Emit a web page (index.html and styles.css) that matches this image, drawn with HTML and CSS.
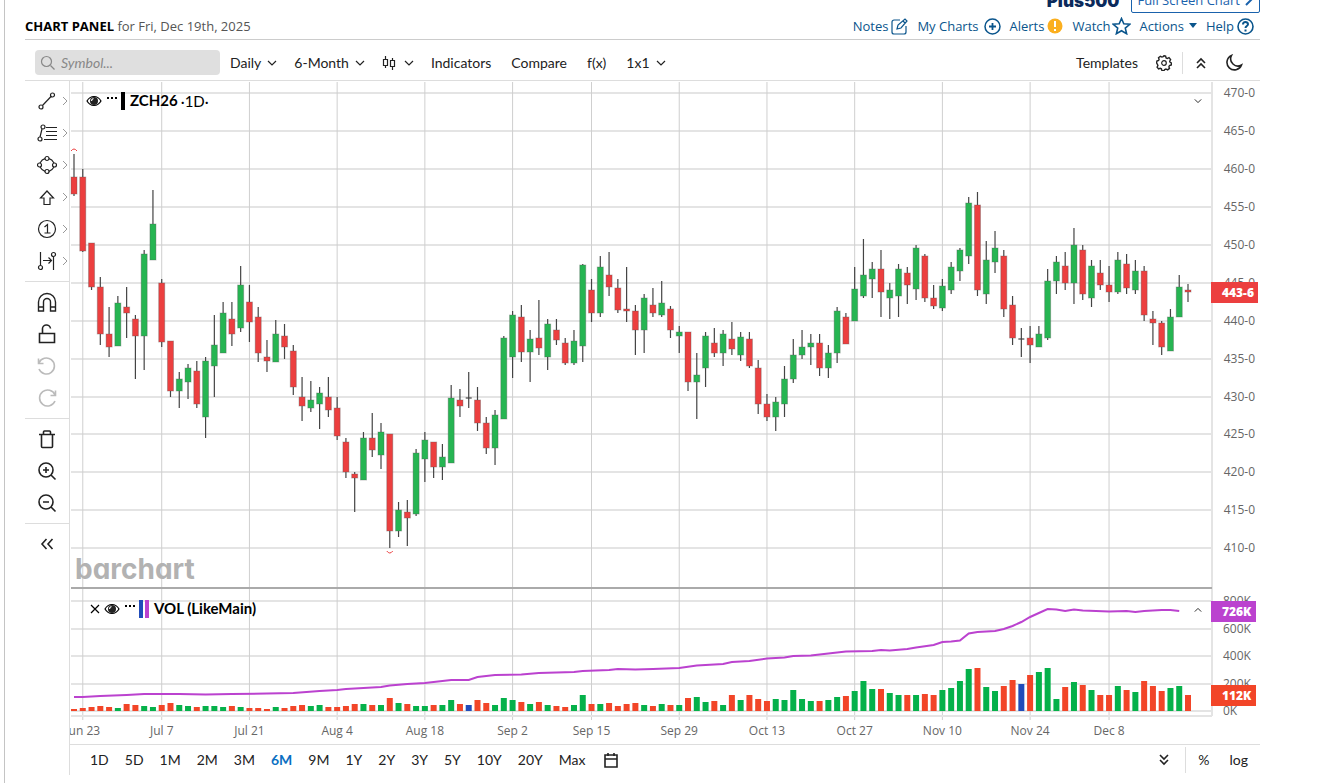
FILE: index.html
```html
<!DOCTYPE html>
<html lang="en">

<head>
    <meta charset="UTF-8">
    <meta name="viewport" content="width=device-width, initial-scale=1.0">
    <title>ZCH26 Interactive Chart</title>
    <link rel="stylesheet" href="styles.css">
</head>

<body>
    <!-- Shared shapes -->
    <svg class="sprite" aria-hidden="true">
        <symbol id="chevron" viewBox="0 0 10 10"><path d="M1 3l4 4 4-4" /></symbol>
        <symbol id="arrow-right" viewBox="0 0 6 10"><path d="M1 1l4 4-4 4" /></symbol>
        <symbol id="double" viewBox="0 0 12 14"><path d="M2 7l4-4 4 4M2 12l4-4 4 4" /></symbol>
        <symbol id="eye" viewBox="0 0 16 12">
            <path d="M1 6c3.500-6 10.500-6 14 0-3.500 6-10.500 6-14 0z" />
            <circle cx="8" cy="6" r="4" fill="#222" stroke="none" />
            <path d="M5.500 6a2.500 2.500 0 0 1 2-2.500" stroke="#fff" />
        </symbol>
        <symbol id="dots" viewBox="0 0 12 4">
            <path d="M1 2h2M5 2h2M9 2h2" stroke-width="2" />
        </symbol>
    </svg>

    <div class="page">
        <div class="promo">
            <span class="promo-logo">Plus500</span>
            <a class="full-screen" href="#full">Full Screen Chart
                <svg class="icon" width="8" height="12" viewBox="0 0 8 12"><path d="M1 1l5 5-5 5" stroke-width="2" /></svg>
            </a>
        </div>

        <header class="panel-header">
            <h1>CHART PANEL <span>for Fri, Dec 19th, 2025</span></h1>
            <nav class="panel-links">
                <a href="#notes">Notes
                    <svg class="icon" width="17" height="17" viewBox="0 0 17 17"><path d="M9 2H3a2 2 0 0 0-2 2v10a2 2 0 0 0 2 2h10a2 2 0 0 0 2-2V8M6 11l1-4 7-6 2 2-6 7zM12 3l2 2" /></svg>
                </a>
                <a href="#charts" class="wide">My Charts
                    <svg class="icon" width="17" height="17" viewBox="0 0 17 17"><circle cx="8.500" cy="8.500" r="7.500" stroke-width="1.500" /><path d="M8.500 5v7M5 8.500h7" stroke-width="1.800" /></svg>
                </a>
                <a href="#alerts">Alerts
                    <svg class="icon" width="16" height="16" viewBox="0 0 16 16"><circle cx="8" cy="8" r="7.500" fill="#fbaf1f" stroke="none" /><path d="M8 3v6M8 11v2" stroke="#fff" stroke-width="2" /></svg>
                </a>
                <a href="#watch" class="tight">Watch
                    <svg class="icon" width="19" height="18" viewBox="0 0 19 18"><path d="M9.500 1.500l2.300 5.300 6 .5-4.500 3.800 1.300 5.600-5.100-3-5.100 3 1.300-5.600L1.200 7.300l6-.5z" stroke-width="1.600" /></svg>
                </a>
                <a href="#actions" class="wide">Actions
                    <svg width="8" height="9" viewBox="0 0 8 9"><path d="M0 1h8L4 6z" fill="#0a558c" /></svg>
                </a>
                <a href="#help">Help
                    <svg class="icon" width="17" height="17" viewBox="0 0 17 17"><circle cx="8.500" cy="8.500" r="7.500" stroke-width="1.600" /><path d="M6 6.500c0-3.300 5-3.200 5-.2 0 1.700-2.500 1.700-2.500 3.700M8.500 11.500v2" stroke-width="2" /></svg>
                </a>
            </nav>
        </header>

        <div class="toolbar">
            <label class="search">
                <svg class="icon" width="16" height="16" viewBox="0 0 16 16"><circle cx="6.500" cy="6.500" r="5" /><path d="M10.500 10.500l4 4" /></svg>
                <input type="text" placeholder="Symbol..." aria-label="Symbol">
            </label>
            <button class="menu">Daily <svg class="icon" width="10" height="10"><use href="#chevron" /></svg></button>
            <button class="menu">6-Month <svg class="icon" width="10" height="10"><use href="#chevron" /></svg></button>
            <button class="menu" aria-label="Bar type">
                <svg class="icon" width="16" height="16" viewBox="0 0 16 16"><path d="M1.500 4.500h4v6h-4zM3.500 1v3M3.500 11v2M8.500 5.500h4v6h-4zM10.500 3v2M10.500 12v3" /></svg>
                <svg class="icon" width="10" height="10"><use href="#chevron" /></svg>
            </button>
            <button>Indicators</button>
            <button>Compare</button>
            <button>f(x)</button>
            <button class="menu">1x1 <svg class="icon" width="10" height="10"><use href="#chevron" /></svg></button>
            <div class="toolbar-right">
                <button>Templates</button>
                <button aria-label="Settings">
                    <svg class="icon" width="16" height="16" viewBox="0 0 16 16"><path d="M8 .8l1.600.3.500 1.800 1.200.6 1.700-.9 1.600 1.900-.9 1.700.4 1.100 1.300.7-.1 2-1.800.5-.6 1.200.6 1.700-1.900 1.500-1.700-.9-1.200.5-.8 1.200-2-.2-.5-1.700-1.200-.5-1.600.6-1.500-1.800.8-1.600-.5-1.200L.6 8l.3-2 1.700-.5.5-1-.6-1.700 1.900-1.500 1.500.8 1.300-.5z" stroke-width="1.400" /><circle cx="8" cy="8" r="2.300" /></svg>
                </button>
                <span class="divider"></span>
                <button aria-label="Collapse"><svg class="icon bold" width="12" height="14"><use href="#double" /></svg></button>
                <button aria-label="Dark mode">
                    <svg class="icon bold" width="18" height="18" viewBox="0 0 18 18"><path d="M6.500 1.500A7.500 7.500 0 1 0 16.500 11 7.200 7.200 0 0 1 6.500 1.500z" /></svg>
                </button>
            </div>
        </div>

        <div class="workspace">
            <div class="tools">
                <div class="tool-group">
                    <button aria-label="Line"><svg class="icon" width="20" height="20" viewBox="0 0 20 20"><circle cx="4" cy="16" r="2" /><circle cx="15.500" cy="4" r="2" /><path d="M5.500 14.500l8.500-9" /></svg><svg class="arrow" width="6" height="10"><use href="#arrow-right" /></svg></button>
                    <button aria-label="Fibonacci"><svg class="icon" width="20" height="20" viewBox="0 0 20 20"><circle cx="3" cy="16" r="2" /><circle cx="6" cy="4" r="2" /><path d="M3 14l1-4 1-4M9 4.500h11M9 8.500h11M9 12.500h11M7 16.500h13" /></svg><svg class="arrow" width="6" height="10"><use href="#arrow-right" /></svg></button>
                    <button aria-label="Shape"><svg class="icon" width="20" height="20" viewBox="0 0 20 20"><circle cx="10" cy="3.500" r="2" /><circle cx="10" cy="16.500" r="2" /><circle cx="2.500" cy="10" r="2" /><circle cx="17.500" cy="10" r="2" /><path d="M3 8Q5 4.500 8 3.700M12 3.700Q15 4.500 17 8M3 12Q5 15.500 8 16.300M12 16.300Q15 15.500 17 12" /></svg><svg class="arrow" width="6" height="10"><use href="#arrow-right" /></svg></button>
                    <button aria-label="Arrow"><svg class="icon" width="20" height="20" viewBox="0 0 20 20"><path d="M10 4l6.500 7H13v6.500H7V11H3.500z" /></svg><svg class="arrow" width="6" height="10"><use href="#arrow-right" /></svg></button>
                    <button aria-label="Count"><svg class="icon" width="20" height="20" viewBox="0 0 20 20"><circle cx="10" cy="10" r="8.500" /><path d="M7.500 8L10.500 5.500V14M7.500 14h6" /></svg><svg class="arrow" width="6" height="10"><use href="#arrow-right" /></svg></button>
                    <button aria-label="Measure"><svg class="icon" width="20" height="20" viewBox="0 0 20 20"><circle cx="3.500" cy="16.500" r="2" /><circle cx="16.500" cy="3.500" r="2" /><path d="M3.500 1v13M16.500 6v13M6 9.500h8M11.500 6.500l3 3-3 3" /></svg><svg class="arrow" width="6" height="10"><use href="#arrow-right" /></svg></button>
                </div>
                <div class="tool-group">
                    <button aria-label="Magnet"><svg class="icon" width="20" height="20" viewBox="0 0 20 20"><path d="M1.500 19v-9a8.500 8.500 0 0 1 17 0v9h-5v-9a3.500 3.500 0 0 0-7 0v9zM1.500 15h5M13.500 15h5" stroke-width="1.400" /></svg></button>
                    <button aria-label="Lock"><svg class="icon bold" width="20" height="20" viewBox="0 0 20 20"><path d="M2.500 9.500h15v9h-15zM5.500 9V5.500a4 4 0 0 1 8-1" /></svg></button>
                    <button aria-label="Undo" disabled><svg class="icon bold" width="20" height="20" viewBox="0 0 20 20"><path d="M1.500 2.500v5h5M2 7a8 8 0 1 1 0 6" /></svg></button>
                    <button aria-label="Redo" disabled><svg class="icon bold" width="20" height="20" viewBox="0 0 20 20"><path d="M18.500 2.500v5h-5M18 7a8 8 0 1 0 0 6" /></svg></button>
                </div>
                <div class="tool-group">
                    <button aria-label="Delete"><svg class="icon bold" width="20" height="20" viewBox="0 0 20 20"><path d="M2 5.500h16M4.500 6v11.500a1 1 0 0 0 1 1h9a1 1 0 0 0 1-1V6M6.500 5V3a1 1 0 0 1 1-1h5a1 1 0 0 1 1 1v2" /></svg></button>
                    <button aria-label="Zoom in"><svg class="icon bold" width="20" height="20" viewBox="0 0 20 20"><circle cx="9" cy="9" r="7" /><path d="M14 14l4.500 4.500M6 9h6M9 6v6" /></svg></button>
                    <button aria-label="Zoom out"><svg class="icon bold" width="20" height="20" viewBox="0 0 20 20"><circle cx="9" cy="9" r="7" /><path d="M14 14l4.500 4.500M6 9h6" /></svg></button>
                </div>
                <div class="tool-group">
                    <button aria-label="Hide tools"><svg class="icon bold" width="20" height="20" viewBox="0 0 20 20"><path d="M9.500 5L5 10l4.500 5M15.500 5L11 10l4.500 5" /></svg></button>
                </div>
            </div>

            <div class="chart-area">
                <div class="chart-box">
                    <svg id="chart" role="img" aria-label="ZCH26 daily price and volume"></svg>
                    <div class="watermark">barchart</div>
                    <div class="legend legend-price">
                        <button aria-label="Hide series"><svg class="icon" width="16" height="12"><use href="#eye" /></svg></button>
                        <button aria-label="Series options" class="more"><svg class="icon" width="12" height="4"><use href="#dots" /></svg></button>
                        <span class="swatch black"></span>
                        <b>ZCH26</b><span>·1D·</span>
                    </div>
                    <button class="pane-toggle toggle-price" aria-label="Collapse pane"><svg class="icon" width="8" height="8"><use href="#chevron" /></svg></button>
                    <div class="legend legend-volume">
                        <button aria-label="Remove"><svg class="icon" width="10" height="10" viewBox="0 0 10 10"><path d="M1 1l8 8M9 1L1 9" /></svg></button>
                        <button aria-label="Hide series"><svg class="icon" width="16" height="12"><use href="#eye" /></svg></button>
                        <button aria-label="Series options" class="more"><svg class="icon" width="12" height="4"><use href="#dots" /></svg></button>
                        <span class="swatch blue"></span><span class="swatch violet"></span>
                        <b>VOL (LikeMain)</b>
                    </div>
                    <button class="pane-toggle toggle-volume" aria-label="Expand pane"><svg class="icon" width="8" height="8"><use href="#chevron" /></svg></button>
                </div>

                <div class="ranges">
                    <button>1D</button>
                    <button>5D</button>
                    <button>1M</button>
                    <button>2M</button>
                    <button>3M</button>
                    <button class="active">6M</button>
                    <button>9M</button>
                    <button>1Y</button>
                    <button>2Y</button>
                    <button>3Y</button>
                    <button>5Y</button>
                    <button>10Y</button>
                    <button>20Y</button>
                    <button>Max</button>
                    <button aria-label="Pick dates"><svg class="icon bold" width="18" height="16" viewBox="0 0 18 16"><path d="M3 3h12v12H3zM3 7h12M6 1v3M12 1v3" /></svg></button>
                    <div class="ranges-right">
                        <button aria-label="Scroll down"><svg class="icon bold flip" width="12" height="14"><use href="#double" /></svg></button>
                        <span class="divider"></span>
                        <button>%</button>
                        <button>log</button>
                    </div>
                </div>
            </div>
        </div>
    </div>

    <script src="chart.js"></script>
</body>

</html>
```

FILE: styles.css
```css
* {
    box-sizing: border-box;
}

body {
    margin: 0;
    font-family: Lato, sans-serif;
    font-size: 14px;
    color: #222;
    background-color: #fff;
}

button {
    padding: 0;
    border: none;
    background: none;
    font: inherit;
    color: inherit;
    line-height: 20px;
    cursor: pointer;
}

a {
    text-decoration: none;
}

svg {
    display: block;
    flex: none;
}

.sprite {
    position: absolute;
    width: 0;
    height: 0;
}

.icon {
    fill: none;
    stroke: currentColor;
    stroke-width: 1.2;
}

.bold {
    stroke-width: 1.6;
}

.flip {
    transform: rotate(180deg);
}

.page {
    min-height: 100vh;
    margin-left: 4px;
    padding: 0 71px 0 20px;
    border-left: 1px solid #c4c4c4;
}

/* Top strip */
.promo {
    display: flex;
    justify-content: flex-end;
    align-items: flex-end;
    gap: 12px;
    height: 13px;
    overflow: hidden;
    font-family: "Open Sans", sans-serif;
}

.promo-logo {
    padding-bottom: 2px;
    font-family: Inter, sans-serif;
    font-size: 17px;
    font-weight: 900;
    line-height: 20px;
    color: #0b2a5b;
}

.full-screen {
    display: flex;
    align-items: center;
    gap: 5px;
    height: 26px;
    padding: 0 6px 0 5px;
    border: 1px solid #1a62ac;
    border-radius: 2px;
    font-size: 13px;
    color: #1a62ac;
    white-space: nowrap;
}

/* Header */
.panel-header {
    display: flex;
    justify-content: space-between;
    align-items: center;
    height: 27px;
    border-bottom: 1px solid #ccc;
    font-family: "Open Sans", sans-serif;
    font-size: 13px;
}

h1 {
    margin: 0;
    font-size: 13px;
    color: #000;
}

h1 span {
    font-weight: 400;
    color: #555;
}

.panel-links {
    display: flex;
    gap: 9px;
    padding-right: 6px;
}

.panel-links a {
    display: flex;
    align-items: center;
    gap: 3px;
    color: #0a558c;
}

.panel-links .wide {
    gap: 5px;
}

.panel-links .tight {
    gap: 1px;
}

/* Toolbar */
.toolbar {
    display: flex;
    align-items: center;
    gap: 20px;
    height: 41px;
    padding: 5px 17px 0 10px;
    border-bottom: 1px solid #ddd;
}

.search {
    display: flex;
    align-items: center;
    gap: 5px;
    width: 185px;
    height: 25px;
    margin-right: -10px;
    padding: 0 5px;
    border-radius: 4px;
    background-color: #dfdfdf;
    color: #888;
}

.search input {
    width: 100%;
    padding: 0;
    border: none;
    outline: none;
    background: none;
    font: italic 14px Lato, sans-serif;
}

.search input::placeholder {
    color: #888;
}

.menu {
    display: flex;
    align-items: center;
    gap: 6px;
    margin-right: -3px;
}

.toolbar-right {
    display: flex;
    align-items: center;
    gap: 18px;
    margin-left: auto;
}

.toolbar-right .divider {
    margin: 0 -6px 0 -8px;
}

.divider {
    width: 1px;
    height: 22px;
    background-color: #ddd;
}

/* Drawing tools */
.workspace {
    display: flex;
}

.tools {
    width: 44px;
}

.tool-group {
    padding: 4px 0;
    border-bottom: 1px solid #ddd;
}

.tool-group:last-child {
    border-bottom: none;
}

.tool-group button {
    display: flex;
    align-items: center;
    gap: 5px;
    width: 44px;
    height: 32px;
    padding-left: 12px;
}

.tool-group button:disabled {
    color: #bbb;
}

.arrow {
    fill: none;
    stroke: #999;
}

/* Chart */
.chart-area {
    flex: 1;
    min-width: 0;
    border-left: 1px solid #ddd;
}

.chart-box {
    position: relative;
}

#chart {
    width: 100%;
    height: 663px;
    font-family: "Open Sans", sans-serif;
    font-size: 12px;
}

.grid {
    stroke: #e4e4e4;
    stroke-width: 2;
}

.grid-date {
    stroke: #cfcfcf;
}

.pane-line {
    stroke: #aaa;
    stroke-width: 2;
}

.axis-text {
    fill: #666;
}

.tag-text {
    fill: #fff;
    font-weight: 800;
}

.wick {
    stroke: #444;
    stroke-width: 1.2;
}

.body {
    stroke: #555;
    stroke-opacity: 0.35;
}

.up {
    fill: #26b552;
}

.down {
    fill: #ec3f3f;
}

.vol-up {
    fill: #05b14a;
}

.vol-down {
    fill: #f24528;
}

.vol-flat {
    fill: #214cba;
}

.open-interest {
    fill: none;
    stroke: #bb42cf;
    stroke-width: 2;
}

.extreme {
    fill: none;
    stroke: #ec3f3f;
}

.watermark {
    position: absolute;
    left: 5px;
    top: 470px;
    font-family: Inter, sans-serif;
    font-size: 28px;
    font-weight: 700;
    font-feature-settings: "cv11";
    line-height: 36px;
    color: #b2b2b2;
}

.legend {
    position: absolute;
    display: flex;
    align-items: center;
    height: 20px;
    font-size: 15px;
    color: #000;
}

.legend-price {
    left: 16px;
    top: 10px;
}

.legend-volume {
    left: 20px;
    top: 518px;
}

.legend button {
    margin-right: 4px;
}

.legend .more {
    margin-right: 3px;
    padding-bottom: 6px;
}

.legend span {
    margin-left: 3px;
}

.legend b {
    margin-left: 5px;
    line-height: 18px;
    padding-bottom: 2px;
}

.legend .swatch {
    width: 4px;
    height: 18px;
    margin-left: 0;
}

.swatch.black {
    background-color: #000;
}

.swatch.blue {
    background-color: #214cba;
}

.legend .violet {
    margin-left: 2px;
    background-color: #bb42cf;
}

.pane-toggle {
    position: absolute;
    right: 58px;
}

.toggle-price {
    top: 16px;
}

.toggle-volume {
    top: 525px;
    transform: rotate(180deg);
}

/* Range bar */
.ranges {
    display: flex;
    align-items: center;
    gap: 16px;
    height: 31px;
    padding: 0 12px 0 20px;
    border-top: 1px solid #ddd;
}

.ranges .active {
    font-weight: 700;
    color: #0a6fc2;
}

.ranges-right {
    display: flex;
    align-items: center;
    gap: 20px;
    margin-left: auto;
}

.ranges-right .divider {
    height: 26px;
    margin: 0 -8px 0 -5px;
}
```

FILE: chart.js
```js
// One row per session: direction, high, body top, body bottom, low, volume height
// Directions: u = up, d = down, f = unchanged
const sessions = `
d 154 177 194 196 2|d 169 177 251 252 3|d 243 243 287 290 4|d 277 287 334 345 5|d 307 334 347 357 4
u 296 303 346 346 3|d 287 307 313 338 7|d 315 319 336 379 6|u 250 254 336 370 5|u 190 224 260 260 4
d 279 283 342 347 6|d 341 341 391 397 8|u 372 379 391 408 6|u 364 368 382 399 5|d 361 371 404 408 4
u 357 361 417 438 5|u 315 345 366 397 5|u 302 313 353 353 4|d 302 319 334 346 5|u 266 285 328 332 4
d 285 302 322 342 3|d 307 317 353 362 3|d 340 357 361 372 2|u 320 334 362 362 4|d 324 336 347 359 3
d 345 351 387 395 5|d 377 397 406 421 6|u 381 400 408 412 5|u 387 393 404 429 6|d 377 397 410 417 4
d 397 408 436 440 4|d 438 442 472 478 5|d 472 474 478 512 7|u 432 438 480 480 7|d 413 438 450 457 6
u 423 432 455 469 6|d 434 434 531 548 13|u 502 510 531 537 8|d 500 512 518 546 7|u 449 453 514 516 5
u 432 440 459 482 5|d 442 442 467 478 6|u 444 457 467 480 6|u 385 398 463 463 11|d 389 400 406 417 7
f 372 398 399 408 6|d 387 400 423 431 11|d 417 423 448 454 8|u 410 415 448 465 6|u 336 338 419 419 13
u 311 315 357 378 11|d 305 317 352 362 9|u 330 339 352 382 7|d 300 338 348 355 9|u 319 324 357 370 6
d 319 330 340 345 5|d 338 343 363 365 4|u 330 341 363 365 6|u 264 265 346 362 16|d 279 290 313 322 7
u 256 267 313 317 7|d 252 275 287 296 8|d 279 288 310 313 5|d 267 309 311 322 7|d 305 311 330 355 8
u 294 298 330 353 6|d 288 305 313 317 5|u 281 303 315 317 7|d 306 309 330 338 6|u 326 332 336 353 6
d 332 332 382 391 13|u 353 375 382 419 14|u 332 336 368 387 9|d 328 343 353 357 10|u 330 334 353 366 6
d 322 339 349 355 16|u 332 337 355 361 11|d 332 339 366 368 16|d 360 368 404 414 12|d 394 404 417 421 10
u 397 402 417 431 12|u 366 379 404 417 11|u 339 355 379 383 21|u 330 347 355 359 12|u 334 343 347 365 10
d 334 343 368 376 10|u 345 353 368 378 11|u 307 311 353 363 14|d 313 317 344 344 15|u 267 289 321 321 20
u 239 275 296 298 30|u 262 269 279 298 22|d 250 269 292 317 22|u 283 290 298 319 18|u 264 269 296 317 16
d 267 273 285 304 16|u 245 248 289 300 16|d 254 256 298 302 17|d 285 298 306 309 16|u 279 286 308 311 21
u 262 267 290 294 23|u 248 250 271 281 30|u 197 203 256 264 42|d 192 205 290 296 43|u 241 260 294 304 24
u 231 248 262 273 20|d 250 256 309 317 25|d 296 305 338 345 31|f 328 339 340 357 27|d 326 338 345 363 36
u 326 334 347 347 39|u 269 281 338 340 43|u 256 262 281 294 12|d 252 266 283 290 24|u 228 245 283 304 29
d 245 250 294 300 26|u 260 266 298 307 21|d 260 273 285 290 16|d 266 285 292 302 16|u 252 260 292 294 25
d 254 264 288 294 21|u 260 271 290 294 19|d 266 271 315 321 30|d 311 319 323 345 25|d 321 323 347 355 20
u 309 317 351 351 23|u 275 287 317 317 25|d 284 290 292 302 16
`.trim().split(/[|\n]/).map(row => {
    const [dir, ...nums] = row.split(' ');
    return [dir, ...nums.map(Number)];
});

// Session index and height of the open interest line
const openInterest = [
    [0, 697], [1, 697], [3, 696], [6, 695], [8, 694], [12, 694], [15, 694.5], [18, 694], [22, 693.5],
    [25, 693], [28, 691], [30, 690], [31, 689], [33, 688], [35, 687], [36, 685.5], [38, 684], [40, 683],
    [42, 681], [43, 680], [45, 680], [46, 677], [48, 675], [51, 674.5], [53, 673], [57, 672], [58, 671],
    [61, 670], [62, 669], [64, 669.5], [66, 669], [69, 668], [71, 665.5], [73, 664.5], [74, 664], [75, 662],
    [77, 661], [79, 658.5], [81, 657.5], [82, 656], [84, 655.5], [86, 653.5], [88, 651.5], [91, 651],
    [92, 650], [93, 650.5], [95, 649], [96, 647.5], [98, 645], [99, 642], [100, 641.5], [101, 640.5],
    [102, 633.5], [103, 632], [105, 631], [106, 629], [107, 626], [108, 622], [109, 617], [110, 613],
    [111, 609], [112, 609.5], [113, 611], [114, 609.5], [115, 610.5], [118, 611.5], [120, 611], [121, 612],
    [122, 611], [124, 610], [125, 610], [126, 611]
];

const dates = [
    [1, 'Jun 23'], [10, 'Jul 7'], [20, 'Jul 21'], [30, 'Aug 4'], [40, 'Aug 18'], [50, 'Sep 2'],
    [59, 'Sep 15'], [69, 'Sep 29'], [79, 'Oct 13'], [89, 'Oct 27'], [99, 'Nov 10'], [109, 'Nov 24'],
    [118, 'Dec 8']
];

const chart = document.getElementById('chart');
const chartTop = 81;
const chartHeight = 663;
const volumeBase = 711;

function line(cls, x1, y1, x2, y2) {
    return `<line class="${cls}" x1="${x1}" y1="${y1}" x2="${x2}" y2="${y2}"/>`;
}

function label(text, x, y, anchor) {
    return `<text class="axis-text" x="${x}" y="${y}" text-anchor="${anchor}">${text}</text>`;
}

function tag(text, x, y, width, color) {
    return `<rect x="${x}" y="${y}" width="${width}" height="21" fill="${color}"/>
        <text class="tag-text" x="${x + 11}" y="${y + 15}">${text}</text>`;
}

function drawChart() {
    const width = chart.clientWidth;
    const right = width - 48;
    const step = (right - 28) / (sessions.length - 1);
    const xAt = i => 4 + i * step;
    let out = '';

    // Price grid
    for (let price = 470; price >= 410; price -= 5) {
        const y = Math.round(93.2 + (470 - price) * 455 / 60);
        out += line('grid', 1, y, right, y) + label(price + '-0', width - 5, y + 4, 'end');
    }

    // Volume grid
    [800, 600, 400, 200, 0].forEach(v => {
        const y = Math.round(volumeBase - v * 0.1375);
        out += line('grid', 1, y, right, y) + label(v + 'K', right + 11, y + 4, 'start');
    });

    dates.forEach(([i, text]) => {
        out += line('grid-date', xAt(i), 82, xAt(i), 720) + label(text, xAt(i), 735, 'middle');
    });
    out += line('grid', 1, 716, right, 716) + line('grid', right, 82, right, 716);
    out += line('pane-line', 1, 588, right, 588);

    sessions.forEach(([dir, high, top, bottom, low, volume], i) => {
        const x = xAt(i);
        out += line('wick', x, high, x, low);
        if (dir === 'f') {
            out += line('wick', x - 3, top, x + 3, top);
        } else {
            out += `<rect class="body ${dir === 'u' ? 'up' : 'down'}" x="${x - 3}" y="${top}" width="6" height="${bottom - top}"/>`;
        }
        const kind = { u: 'vol-up', d: 'vol-down', f: 'vol-flat' }[dir];
        out += `<rect class="${kind}" x="${x - 3}" y="${volumeBase - volume}" width="6" height="${volume}"/>`;
    });

    out += `<polyline class="open-interest" points="${openInterest.map(([i, y]) => xAt(i) + ',' + y).join(' ')}"/>`;

    // Marks over the highest and under the lowest session
    out += `<path class="extreme" d="M${xAt(0) - 3} 151q3-4 6 0M${xAt(36) - 3} 551q3 4 6 0"/>`;

    out += tag('443-6', right - 1, 282, 47, '#ec3f3f');
    out += tag('726K', right - 1, 601, 45, '#bb42cf');
    out += tag('112K', right - 1, 685, 45, '#f24528');

    chart.setAttribute('viewBox', `0 ${chartTop} ${width} ${chartHeight}`);
    chart.innerHTML = out;
}

window.addEventListener('resize', drawChart);
drawChart();
```
